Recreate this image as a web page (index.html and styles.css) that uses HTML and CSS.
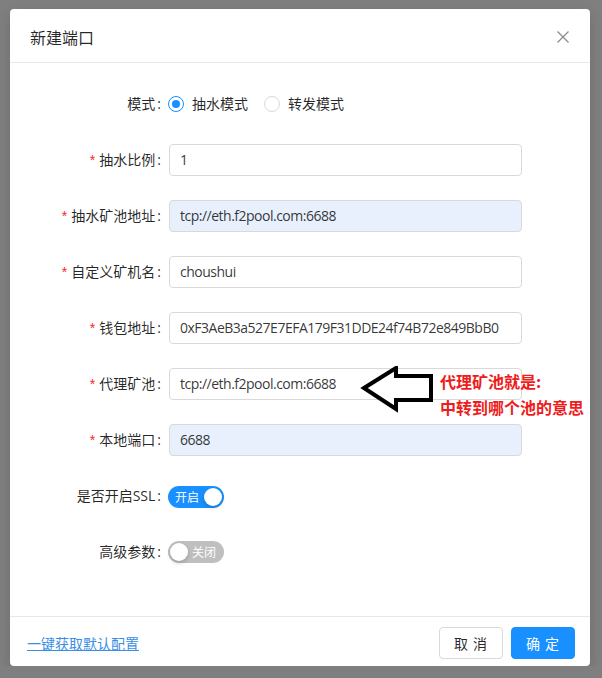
FILE: index.html
```html
<!DOCTYPE html>
<html lang="zh-CN">
<head>
<meta charset="utf-8">
<title>新建端口</title>
<link rel="stylesheet" href="styles.css">
</head>
<body>
<div class="modal">
  <div class="modal-header">
    <div class="modal-title">新建端口</div>
    <svg class="close" width="12" height="12" viewBox="0 0 12 12"><path d="M0.5 0.5 L11.5 11.5 M11.5 0.5 L0.5 11.5" stroke="#8c8c8c" stroke-width="1.3" fill="none"/></svg>
  </div>
  <div class="modal-body">
    <div class="row">
      <label class="label">模式</label>
      <div class="radios">
        <span class="radio-item"><span class="radio checked"></span><span class="radio-text">抽水模式</span></span>
        <span class="radio-item"><span class="radio"></span><span class="radio-text">转发模式</span></span>
      </div>
    </div>
    <div class="row">
      <label class="label"><span class="req">*</span>抽水比例</label>
      <div class="input">1</div>
    </div>
    <div class="row">
      <label class="label"><span class="req">*</span>抽水矿池地址</label>
      <div class="input filled">tcp://eth.f2pool.com:6688</div>
    </div>
    <div class="row">
      <label class="label"><span class="req">*</span>自定义矿机名</label>
      <div class="input">choushui</div>
    </div>
    <div class="row">
      <label class="label"><span class="req">*</span>钱包地址</label>
      <div class="input">0xF3AeB3a527E7EFA179F31DDE24f74B72e849BbB0</div>
    </div>
    <div class="row">
      <label class="label"><span class="req">*</span>代理矿池</label>
      <div class="input">tcp://eth.f2pool.com:6688</div>
    </div>
    <div class="row">
      <label class="label"><span class="req">*</span>本地端口</label>
      <div class="input filled">6688</div>
    </div>
    <div class="row">
      <label class="label">是否开启SSL</label>
      <div><span class="switch on"><span class="switch-text">开启</span><span class="knob"></span></span></div>
    </div>
    <div class="row">
      <label class="label">高级参数</label>
      <div><span class="switch off"><span class="knob"></span><span class="switch-text">关闭</span></span></div>
    </div>
  </div>
  <div class="modal-footer">
    <a class="link" href="#">一键获取默认配置</a>
    <div class="buttons">
      <button class="btn">取 消</button>
      <button class="btn primary">确 定</button>
    </div>
  </div>
  <svg class="arrow" width="76" height="48" viewBox="0 0 76 48">
    <path d="M4 22 L36 2 L36 10 L71 10 L71 34 L36 34 L36 43 Z" fill="#fff" stroke="#000" stroke-width="4" stroke-linejoin="miter"/>
  </svg>
  <div class="note">代理矿池就是:<br>中转到哪个池的意思</div>
</div>
</body>
</html>
```
FILE: styles.css
```css
html, body {
  margin: 0;
  padding: 0;
}
body {
  background: #7f7f7f;
  font-family: "Open Sans", "Noto Sans CJK SC", sans-serif;
  font-size: 14px;
  color: rgba(0, 0, 0, 0.85);
  padding: 9px 12px 0 10px;
}
.modal {
  position: relative;
  width: 580px;
  background: #fff;
  border-radius: 4px;
  box-shadow: 0 4px 12px rgba(0, 0, 0, 0.15);
}
.modal-header {
  height: 53px;
  border-bottom: 1px solid #e8e8e8;
  display: flex;
  align-items: center;
  justify-content: space-between;
  padding: 0 21px 0 20px;
}
.modal-title {
  font-family: "Noto Sans CJK SC", sans-serif;
  font-size: 16px;
  line-height: 22px;
  padding-top: 3px;
  color: rgba(0, 0, 0, 0.85);
}
.close {
  display: block;
  margin-top: 3px;
}
.modal-body {
  padding: 25px 0 48px 0;
}
.row {
  display: grid;
  grid-template-columns: 159px 353px;
  align-items: center;
  height: 32px;
  margin-bottom: 24px;
}
.row:last-child {
  margin-bottom: 0;
}
.label {
  text-align: right;
  padding-right: 8px;
  line-height: 32px;
  white-space: nowrap;
}
.label::after {
  content: ":";
  margin-left: 2px;
}
.req {
  color: #f5222d;
  margin-right: 4px;
  font-family: SimSun, "Liberation Sans", sans-serif;
}
.input {
  height: 32px;
  box-sizing: border-box;
  border: 1px solid #d9d9d9;
  border-radius: 4px;
  padding: 0 10px;
  line-height: 30px;
  font-size: 14px;
  letter-spacing: -0.5px;
  color: rgba(0, 0, 0, 0.8);
  background: #fff;
  white-space: nowrap;
  overflow: hidden;
}
.input.filled {
  background: #e8f0fe;
}
.radios {
  display: flex;
  align-items: center;
  margin-left: -1px;
}
.radio-item {
  display: inline-flex;
  align-items: center;
  margin-right: 8px;
}
.radio {
  width: 16px;
  height: 16px;
  box-sizing: border-box;
  border: 1px solid #d9d9d9;
  border-radius: 50%;
  position: relative;
}
.radio.checked {
  border-color: #1890ff;
}
.radio.checked::after {
  content: "";
  position: absolute;
  left: 3px;
  top: 3px;
  width: 8px;
  height: 8px;
  border-radius: 50%;
  background: #1890ff;
}
.radio-text {
  padding: 0 8px;
  line-height: 22px;
}
.switch {
  display: inline-flex;
  align-items: center;
  box-sizing: border-box;
  width: 56px;
  height: 22px;
  border-radius: 11px;
  padding: 0 2px;
  margin-left: -1px;
  margin-top: 1px;
}
.switch.on {
  background: #1890ff;
  justify-content: space-between;
}
.switch.off {
  background: #bfbfbf;
  justify-content: space-between;
}
.switch-text {
  font-family: "Noto Sans CJK SC", sans-serif;
  font-size: 12px;
  line-height: 20px;
  color: #fff;
}
.switch.on .switch-text {
  margin-left: 5px;
}
.switch.off .switch-text {
  margin-right: 6px;
}
.knob {
  width: 18px;
  height: 18px;
  border-radius: 50%;
  background: #fff;
  box-shadow: 0 2px 4px rgba(0, 35, 11, 0.2);
}
.modal-footer {
  border-top: 1px solid #e8e8e8;
  padding: 10px 15px 7px 17px;
  display: flex;
  align-items: center;
  justify-content: space-between;
}
.link {
  color: #3a8ee6;
  text-decoration: underline;
  font-family: "Noto Sans CJK SC", sans-serif;
  font-size: 14px;
  line-height: 22px;
}
.buttons {
  display: flex;
  gap: 8px;
}
.btn {
  width: 64px;
  height: 32px;
  box-sizing: border-box;
  border: 1px solid #d9d9d9;
  border-radius: 4px;
  background: #fff;
  color: rgba(0, 0, 0, 0.85);
  font-family: "Noto Sans CJK SC", sans-serif;
  font-size: 14px;
  padding: 0;
  letter-spacing: 1px;
}
.btn.primary {
  background: #1890ff;
  border-color: #1890ff;
  color: #fff;
}
.arrow {
  position: absolute;
  left: 350px;
  top: 357px;
}
.note {
  position: absolute;
  left: 430px;
  top: 359px;
  font-family: "Noto Sans CJK SC", sans-serif;
  font-weight: 700;
  font-size: 16px;
  line-height: 26px;
  color: #ee1c1c;
  white-space: nowrap;
}
```
